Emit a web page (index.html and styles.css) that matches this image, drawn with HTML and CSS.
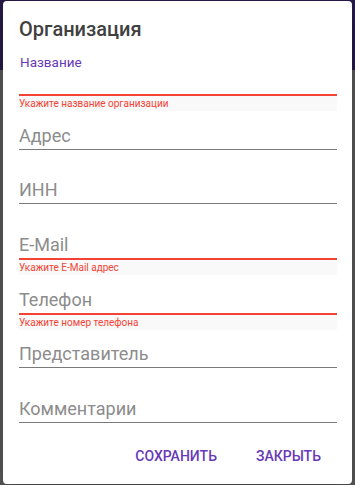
FILE: index.html
```html
<!DOCTYPE html>
<html lang="ru">
<head>
<meta charset="utf-8">
<title>Организация</title>
<link rel="stylesheet" href="styles.css">
</head>
<body>
<div class="dialog">
  <h2 class="title">Организация</h2>
  <div class="fields">
    <div class="field invalid focused">
      <div class="float-label">Название</div>
      <div class="input"><span class="value"></span></div>
      <div class="error">Укажите название организации</div>
    </div>
    <div class="field">
      <div class="float-label"></div>
      <div class="input"><span class="ph">Адрес</span></div>
    </div>
    <div class="field">
      <div class="float-label"></div>
      <div class="input"><span class="ph">ИНН</span></div>
    </div>
    <div class="field invalid">
      <div class="float-label"></div>
      <div class="input"><span class="ph">E-Mail</span></div>
      <div class="error">Укажите E-Mail адрес</div>
    </div>
    <div class="field invalid">
      <div class="float-label"></div>
      <div class="input"><span class="ph">Телефон</span></div>
      <div class="error">Укажите номер телефона</div>
    </div>
    <div class="field">
      <div class="float-label"></div>
      <div class="input"><span class="ph">Представитель</span></div>
    </div>
    <div class="field">
      <div class="float-label"></div>
      <div class="input"><span class="ph">Комментарии</span></div>
    </div>
  </div>
  <div class="actions">
    <button class="btn">СОХРАНИТЬ</button>
    <button class="btn">ЗАКРЫТЬ</button>
  </div>
</div>
</body>
</html>
```
FILE: styles.css
```css
html, body {
  margin: 0;
  padding: 0;
  height: 100%;
  overflow: hidden;
}
body {
  background: linear-gradient(#261a45 0, #261a45 70px, #585858 70px, #585858 100%);
  font-family: Roboto, "Noto Sans", sans-serif;
}
.dialog {
  margin: 1px 3px 0 3px;
  height: 483px;
  box-sizing: border-box;
  padding: 16px 15px 0 16px;
  background: #fff;
  border-radius: 4px;
  box-shadow: 0 11px 15px -7px rgba(0,0,0,.2), 0 24px 38px 3px rgba(0,0,0,.14);
}
.title {
  margin: 0 0 16px 0;
  font-size: 20px;
  line-height: 24px;
  font-weight: 500;
  color: #404040;
}
.fields {
  display: flex;
  flex-direction: column;
}
.field {
  height: 54.67px;
  display: flex;
  flex-direction: column;
}
.float-label {
  height: 15px;
  padding-left: 1px;
  font-size: 13.5px;
  line-height: 10px;
  color: #673ab7;
}
.input {
  height: 18px;
  padding-bottom: 4px;
  border-bottom: 1px solid #7a7a7a;
  font-size: 18px;
  line-height: 18px;
  white-space: nowrap;
}
.ph {
  color: #8c8c8c;
}
.invalid .input {
  border-bottom: 2px solid #f44336;
}
.error {
  height: 15px;
  line-height: 15px;
  font-size: 10px;
  color: #f44336;
  background: #f9f9f9;
}
.actions {
  margin-top: -2px;
  display: flex;
  justify-content: flex-end;
  gap: 7px;
}
.btn {
  height: 36px;
  padding: 0 16px;
  border: 0;
  background: transparent;
  font-family: Roboto, "Noto Sans", sans-serif;
  font-size: 14px;
  font-weight: 500;
  line-height: 36px;
  color: #673ab7;
  border-radius: 4px;
}
```
